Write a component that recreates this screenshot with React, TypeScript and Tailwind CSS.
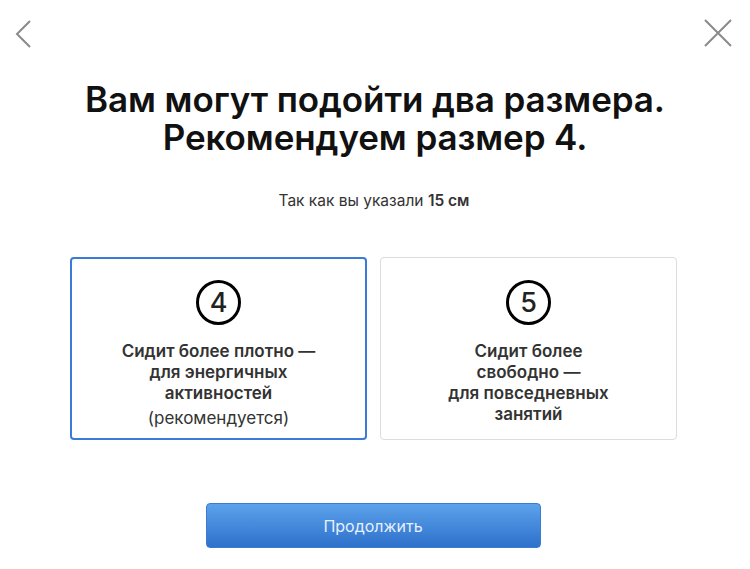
import React from "react";

const font = { fontFamily: "Inter, 'Noto Sans', sans-serif" };

const SizeCard = ({
  num,
  lines,
  note,
  active,
}: {
  num: string;
  lines: string[];
  note?: string;
  active?: boolean;
}) => {
  return (
    <div
      className={
        "flex flex-col items-center rounded-[4px] bg-white h-[183px] w-[297px] " +
        (active ? "border-2 border-[#3a7bd8] pt-[21px]" : "border border-[#dcdcdc] pt-[22px]")
      }
    >
      <div className="w-[45px] h-[45px] rounded-full border-[3px] border-black flex items-center justify-center text-[27px] font-medium text-[#222] leading-none">
        {num}
      </div>
      <div className="mt-[16px] text-center text-[17px] leading-[21px] font-semibold text-[#333]">
        {lines.map((l) => (
          <div key={l}>{l}</div>
        ))}
        {note && <div className="font-normal mt-[4px]">{note}</div>}
      </div>
    </div>
  );
};

export default function App() {
  return (
    <div className="w-[750px] h-[569px] bg-white relative overflow-hidden" style={font}>
      <div className="flex justify-between px-[14px] pt-[18px] h-[60px]">
        <svg width="20" height="30" viewBox="0 0 20 30" className="mt-[1px]">
          <path d="M16 2 L3 15 L16 28" fill="none" stroke="#8a8a8a" strokeWidth="2" />
        </svg>
        <svg width="32" height="30" viewBox="0 0 32 30" className="mr-[2px]">
          <path d="M3 2 L29 28 M29 2 L3 28" fill="none" stroke="#8a8a8a" strokeWidth="2" />
        </svg>
      </div>
      <h1 className="text-center text-[35px] leading-[38px] font-semibold text-[#111] tracking-[-0.1px] mt-[20px]">
        Вам могут подойти два размера.
        <br />
        Рекомендуем размер 4.
      </h1>
      <p className="text-center text-[15.5px] text-[#333] mt-[33px] pr-[2px]">
        Так как вы указали <span className="font-semibold">15 см</span>
      </p>
      <div className="flex justify-center gap-[13px] mt-[45px] pr-[3px]">
        <SizeCard
          num="4"
          active
          lines={["Сидит более плотно —", "для энергичных", "активностей"]}
          note="(рекомендуется)"
        />
        <SizeCard num="5" lines={["Сидит более", "свободно —", "для повседневных", "занятий"]} />
      </div>
      <div className="flex justify-center mt-[63px] pr-[4px]">
        <button className="w-[335px] h-[45px] rounded-[4px] bg-gradient-to-b from-[#5ca2eb] to-[#2d71cb] border border-[#3b7bd0] text-[16px] text-[#e8f0fb]">
          Продолжить
        </button>
      </div>
    </div>
  );
}
